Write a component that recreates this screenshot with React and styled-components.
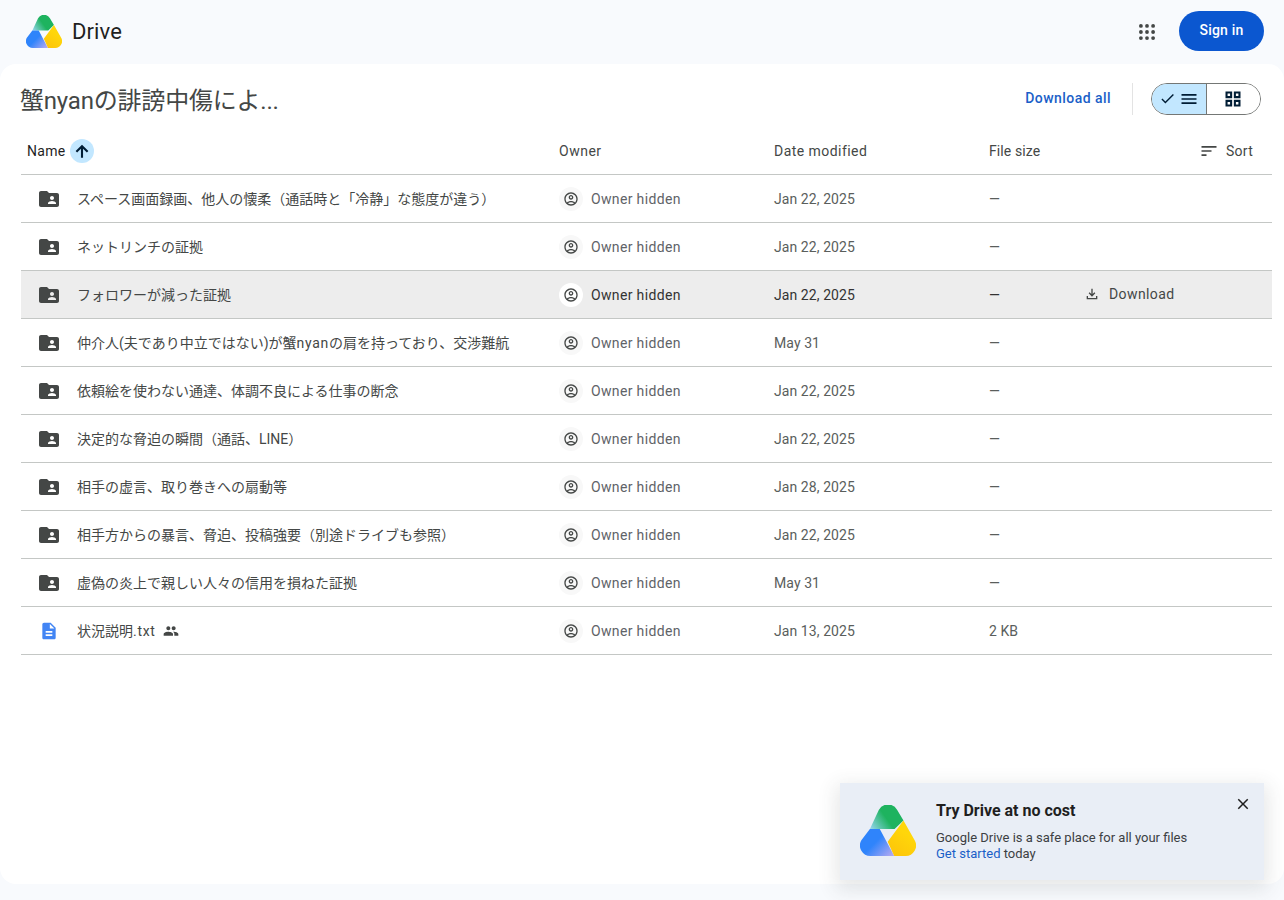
import React from 'react'
import styled, { createGlobalStyle } from 'styled-components'

const Global = createGlobalStyle`
  html, body { margin: 0; padding: 0; background: #f8fafd; }
  body { font-family: Roboto, "Noto Sans CJK JP", sans-serif; font-size: 14px; color: #444746; }
`

const Page = styled.div`
  position: relative;
  display: flex;
  flex-direction: column;
  height: 900px;
  overflow: hidden;
`

const TopBar = styled.header`
  display: flex;
  align-items: center;
  justify-content: space-between;
  height: 64px;
  flex: none;
  padding: 0 20px 2px 26px;
  box-sizing: border-box;
`

const Brand = styled.div`
  display: flex;
  align-items: center;
  gap: 10px;
  font-size: 22px;
  letter-spacing: 0.1px;
  color: #1f1f1f;
`

const TopActions = styled.div`
  display: flex;
  align-items: center;
  gap: 24px;
`

const AppsIcon = styled.svg`
  margin-top: 2px;
  fill: #444746;
`

const SignIn = styled.button`
  width: 85px;
  height: 40px;
  padding: 0 0 2px;
  border: 0;
  border-radius: 20px;
  background: #0b57d0;
  color: #fff;
  font: 500 14px Roboto, sans-serif;
  letter-spacing: 0.2px;
`

const Card = styled.main`
  flex: 1;
  margin-bottom: 16px;
  background: #fff;
  border-radius: 16px;
  padding: 0 12px 0 21px;
`

const Toolbar = styled.div`
  display: flex;
  align-items: center;
  height: 63px;
  padding-top: 6px;
  box-sizing: border-box;
`

const Title = styled.h1`
  flex: 1;
  margin: 0 0 0 -1px;
  font-size: 24px;
  font-weight: 400;
  letter-spacing: -0.2px;
  color: #444746;
`

const DownloadAll = styled.a`
  font-weight: 500;
  letter-spacing: 0.45px;
  margin-top: -2px;
  color: #1a5fc8;
`

const Divider = styled.div`
  width: 1px;
  height: 32px;
  margin: 0 18px 0 21px;
  background: #e3e3e3;
`

const Toggle = styled.div`
  display: flex;
  width: 110px;
  height: 32px;
  margin-right: 11px;
  box-sizing: border-box;
  border: 1px solid #747775;
  border-radius: 16px;
  overflow: hidden;
`

const ToggleSide = styled.div`
  display: flex;
  align-items: center;
  justify-content: center;
  gap: 3px;
  flex: 1;
  background: ${p => (p.$on ? '#c2e7ff' : '#fff')};
  color: #001d35;
  & + & { border-left: 1px solid #747775; }
`

const Columns = styled.div`
  display: grid;
  grid-template-columns: 538px 215px 215px 96px 1fr;
  align-items: center;
  height: 48px;
  box-sizing: border-box;
  border-bottom: 1px solid #c4c7c5;
  background: ${p => (p.$hover ? '#ededed' : 'transparent')};
`

const HeadCell = styled.div`
  letter-spacing: ${p => p.$spacing || '0'};
  color: #444746;
`

const NameHead = styled.div`
  display: flex;
  align-items: center;
  gap: 4px;
  padding-left: 6px;
  letter-spacing: 0.3px;
  color: #1f1f1f;
`

const SortBadge = styled.span`
  display: flex;
  align-items: center;
  justify-content: center;
  width: 24px;
  height: 24px;
  border-radius: 50%;
  background: #c2e7ff;
  color: #001d35;
`

const SortCell = styled.div`
  display: flex;
  align-items: center;
  justify-content: flex-end;
  gap: 7px;
  padding-right: 19px;
  letter-spacing: 0.25px;
  color: #444746;
`

const NameCell = styled.div`
  display: flex;
  align-items: center;
  padding-left: 16px;
  color: #444746;
`

const NameText = styled.span`
  margin-top: -2px;
`

const Latin = styled.span`
  letter-spacing: 0.7px;
`

const IconBox = styled.span`
  display: flex;
  align-items: center;
  justify-content: center;
  width: 24px;
  height: 24px;
  margin-right: 16px;
  color: ${p => p.$color || '#444746'};
`

const Shared = styled.span`
  display: flex;
  margin-left: 7px;
  color: #444746;
`

const OwnerCell = styled.div`
  display: flex;
  align-items: center;
  gap: 8px;
  letter-spacing: 0.35px;
  color: ${p => (p.$hover ? '#333' : '#5f6368')};
`

const Avatar = styled.span`
  display: flex;
  align-items: center;
  justify-content: center;
  width: 24px;
  height: 24px;
  border-radius: 50%;
  background: ${p => (p.$hover ? '#fff' : '#f8f8f8')};
  color: #444746;
`

const Value = styled.div`
  letter-spacing: 0.08px;
  color: ${p => (p.$hover ? '#333' : '#5a5e5c')};
`

const DownloadRow = styled.div`
  display: flex;
  align-items: center;
  gap: 9px;
  margin-top: -2px;
  letter-spacing: 0.4px;
  color: #444746;
  svg { margin-left: -1px; }
`

const Promo = styled.aside`
  position: absolute;
  left: 840px;
  top: 783px;
  display: flex;
  width: 424px;
  height: 97px;
  box-sizing: border-box;
  padding: 22px 0 0 20px;
  background: #e9eef6;
  box-shadow: 0 6px 18px 4px rgba(60, 64, 67, 0.12);
`

const PromoText = styled.div`
  margin-left: 20px;
  font-size: 13px;
  line-height: 16px;
  color: #3c4043;
`

const PromoTitle = styled.div`
  margin: -3px 0 10px;
  font-size: 16px;
  line-height: 18px;
  font-weight: 700;
  color: #1f1f1f;
`

const PromoLink = styled.a`
  color: #1a5fc8;
`

const Close = styled.span`
  position: absolute;
  top: 12px;
  right: 12px;
  display: flex;
  color: #1f1f1f;
`

const Icon = ({ d, size = 24 }) => (
  <svg width={size} height={size} viewBox="0 0 24 24" fill="currentColor">
    <path d={d} />
  </svg>
)

const FOLDER = 'M20 6h-8l-2-2H4c-1.1 0-1.99.9-1.99 2L2 18c0 1.1.9 2 2 2h16c1.1 0 2-.9 2-2V8c0-1.1-.9-2-2-2zm-5 3c1.1 0 2 .9 2 2s-.9 2-2 2-2-.9-2-2 .9-2 2-2zm4 8h-8v-1c0-1.33 2.67-2 4-2s4 .67 4 2v1z'
const DOC = 'M14 2H6c-1.1 0-1.99.9-1.99 2L4 20c0 1.1.89 2 1.99 2H18c1.1 0 2-.9 2-2V8l-6-6zm2 16H8v-2h8v2zm0-4H8v-2h8v2zm-3-5V3.5L18.5 9H13z'
const GROUP = 'M16 11c1.66 0 2.99-1.34 2.99-3S17.66 5 16 5c-1.66 0-3 1.34-3 3s1.34 3 3 3zm-8 0c1.66 0 2.99-1.34 2.99-3S9.66 5 8 5C6.34 5 5 6.34 5 8s1.34 3 3 3zm0 2c-2.33 0-7 1.17-7 3.5V19h14v-2.5c0-2.33-4.67-3.5-7-3.5zm8 0c-.29 0-.62.02-.97.05 1.16.84 1.97 1.97 1.97 3.45V19h6v-2.5c0-2.33-4.67-3.5-7-3.5z'
const ACCOUNT = 'M12 2C6.48 2 2 6.48 2 12s4.48 10 10 10 10-4.48 10-10S17.52 2 12 2zM7.35 18.5C8.66 17.56 10.26 17 12 17s3.34.56 4.65 1.5C15.34 19.44 13.74 20 12 20s-3.34-.56-4.65-1.5zm10.79-1.38C16.45 15.8 14.32 15 12 15s-4.45.8-6.14 2.12C4.7 15.73 4 13.95 4 12c0-4.42 3.58-8 8-8s8 3.58 8 8c0 1.95-.7 3.73-1.86 5.12zM12 6c-1.93 0-3.5 1.57-3.5 3.5S10.07 13 12 13s3.5-1.57 3.5-3.5S13.93 6 12 6zm0 5c-.83 0-1.5-.67-1.5-1.5S11.17 8 12 8s1.5.67 1.5 1.5S12.83 11 12 11z'
const ARROW_UP = 'M3.5 12l2 2L10.6 8.9V21h2.8V8.9l5.1 5.1 2-2L12 3.5z'
const SORT = 'M3 18h6v-2H3v2zM3 6v2h18V6H3zm0 7h12v-2H3v2z'
const DOWNLOAD = 'M12 16l-5-5 1.4-1.45 2.6 2.6V4h2v8.15l2.6-2.6L17 11l-5 5zm-8 4v-5h2v3h12v-3h2v5H4z'
const CHECK = 'M9 16.17 4.83 12l-1.42 1.41L9 19 21 7l-1.41-1.41z'
const LIST = 'M3 18h18v-2H3v2zm0-5h18v-2H3v2zm0-7v2h18V6H3z'
const GRID = 'M3 3h8v8H3V3zm2.5 2.5v3h3v-3h-3zM13 3h8v8h-8V3zm2.5 2.5v3h3v-3h-3zM3 13h8v8H3v-8zm2.5 2.5v3h3v-3h-3zM13 13h8v8h-8v-8zm2.5 2.5v3h3v-3h-3z'
const CLOSE = 'M19 6.41 17.59 5 12 10.59 6.41 5 5 6.41 10.59 12 5 17.59 6.41 19 12 13.41 17.59 19 19 17.59 13.41 12z'

const Logo = ({ id, width, height }) => (
  <svg width={width} height={height} viewBox="0 0 170 155">
    <defs>
      <linearGradient id={`${id}g`} x1="30" y1="75" x2="80" y2="40" gradientUnits="userSpaceOnUse">
        <stop offset="0" stopColor="#9ad6f5" />
        <stop offset="1" stopColor="#1eb35f" />
      </linearGradient>
      <linearGradient id={`${id}b`} x1="55" y1="105" x2="100" y2="150" gradientUnits="userSpaceOnUse">
        <stop offset="0" stopColor="#2f84fb" />
        <stop offset="1" stopColor="#b0a8f2" />
      </linearGradient>
      <linearGradient id={`${id}y`} x1="100" y1="150" x2="145" y2="90" gradientUnits="userSpaceOnUse">
        <stop offset="0" stopColor="#fdc50a" />
        <stop offset="1" stopColor="#ffd60a" />
      </linearGradient>
    </defs>
    <path fill={`url(#${id}g)`} d="M57 15A32 32 0 0 1 113 15L132 47 105 73H30Z" />
    <path fill={`url(#${id}b)`} d="M30 73H60L104 155H32A32 32 0 0 1 4 107Z" />
    <path fill={`url(#${id}y)`} d="M132 47 166 107A32 32 0 0 1 138 155H104L84 112Z" />
  </svg>
)

const Dots = () => (
  <AppsIcon width="16" height="16" viewBox="0 0 16 16">
    {[1.9, 8, 14.1].flatMap(y => [1.9, 8, 14.1].map(x => (
      <circle key={`${x}-${y}`} cx={x} cy={y} r="1.9" />
    )))}
  </AppsIcon>
)

const files = [
  { name: 'スペース画面録画、他人の懐柔（通話時と「冷静」な態度が違う）', date: 'Jan 22, 2025' },
  { name: 'ネットリンチの証拠', date: 'Jan 22, 2025' },
  { name: 'フォロワーが減った証拠', date: 'Jan 22, 2025', hover: true },
  { name: <>仲介人(夫であり中立ではない)が蟹<Latin>nyan</Latin>の肩を持っており、交渉難航</>, date: 'May 31' },
  { name: '依頼絵を使わない通達、体調不良による仕事の断念', date: 'Jan 22, 2025' },
  { name: '決定的な脅迫の瞬間（通話、LINE）', date: 'Jan 22, 2025' },
  { name: '相手の虚言、取り巻きへの扇動等', date: 'Jan 28, 2025' },
  { name: '相手方からの暴言、脅迫、投稿強要（別途ドライブも参照）', date: 'Jan 22, 2025' },
  { name: '虚偽の炎上で親しい人々の信用を損ねた証拠', date: 'May 31' },
  { name: <>状況説明<Latin>.txt</Latin></>, date: 'Jan 13, 2025', size: '2 KB', doc: true },
]

export default function App() {
  return (
    <Page>
      <Global />
      <TopBar>
        <Brand>
          <Logo id="top" width={36} height={33} />
          Drive
        </Brand>
        <TopActions>
          <Dots />
          <SignIn>Sign in</SignIn>
        </TopActions>
      </TopBar>
      <Card>
        <Toolbar>
          <Title>蟹nyanの誹謗中傷によ...</Title>
          <DownloadAll>Download all</DownloadAll>
          <Divider />
          <Toggle>
            <ToggleSide $on>
              <Icon d={CHECK} size={17} />
              <Icon d={LIST} size={20} />
            </ToggleSide>
            <ToggleSide>
              <Icon d={GRID} size={20} />
            </ToggleSide>
          </Toggle>
        </Toolbar>
        <Columns>
          <NameHead>
            Name
            <SortBadge><Icon d={ARROW_UP} size={18} /></SortBadge>
          </NameHead>
          <HeadCell $spacing="0.5px">Owner</HeadCell>
          <HeadCell $spacing="0.45px">Date modified</HeadCell>
          <HeadCell $spacing="0.1px">File size</HeadCell>
          <SortCell>
            <Icon d={SORT} size={20} />
            Sort
          </SortCell>
        </Columns>
        {files.map((file, index) => (
          <Columns key={index} $hover={file.hover}>
            <NameCell>
              <IconBox $color={file.doc ? '#4285f4' : '#444746'}>
                <Icon d={file.doc ? DOC : FOLDER} size={file.doc ? 20 : 24} />
              </IconBox>
              <NameText>{file.name}</NameText>
              {file.doc && <Shared><Icon d={GROUP} size={16} /></Shared>}
            </NameCell>
            <OwnerCell $hover={file.hover}>
              <Avatar $hover={file.hover}><Icon d={ACCOUNT} size={16} /></Avatar>
              Owner hidden
            </OwnerCell>
            <Value $hover={file.hover}>{file.date}</Value>
            <Value $hover={file.hover}>{file.size || '—'}</Value>
            {file.hover ? (
              <DownloadRow>
                <Icon d={DOWNLOAD} size={16} />
                Download
              </DownloadRow>
            ) : <div />}
          </Columns>
        ))}
      </Card>
      <Promo>
        <Logo id="promo" width={56} height={51} />
        <PromoText>
          <PromoTitle>Try Drive at no cost</PromoTitle>
          Google Drive is a safe place for all your files
          <br />
          <PromoLink>Get started</PromoLink> today
        </PromoText>
        <Close><Icon d={CLOSE} size={18} /></Close>
      </Promo>
    </Page>
  )
}
